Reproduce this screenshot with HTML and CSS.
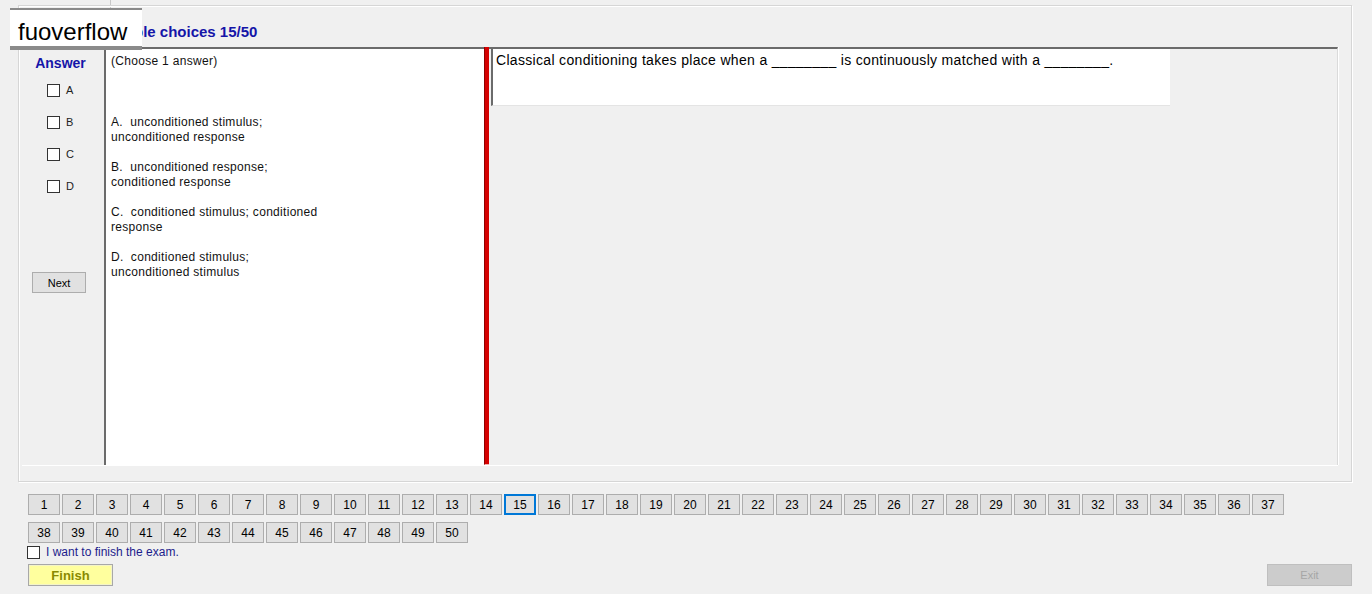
FILE: index.html
```html
<!DOCTYPE html>
<html lang="en">

<head>
    <meta charset="UTF-8">
    <meta name="viewport" content="width=device-width, initial-scale=1.0">
    <title>Exam</title>
    <link rel="stylesheet" href="styles.css">
</head>

<body>
    <div class="topstrip"><div class="tab"></div></div>

    <div class="group">
        <div class="group-title">Multiple choices 15/50</div>
        <div class="main">
            <!-- answer column -->
            <div class="answers">
                <div class="answers-head">Answer</div>
                <div class="answer-list">
                    <label class="answer-row"><span class="box"></span>A</label>
                    <label class="answer-row"><span class="box"></span>B</label>
                    <label class="answer-row"><span class="box"></span>C</label>
                    <label class="answer-row"><span class="box"></span>D</label>
                </div>
                <button class="btn next-btn">Next</button>
            </div>

            <!-- choices -->
            <div class="choices">
                <div class="choose">(Choose 1 answer)</div>
                <div class="option">A.&nbsp; unconditioned stimulus;<br>unconditioned response</div>
                <div class="option">B.&nbsp; unconditioned response;<br>conditioned response</div>
                <div class="option">C.&nbsp; conditioned stimulus; conditioned<br>response</div>
                <div class="option">D.&nbsp; conditioned stimulus;<br>unconditioned stimulus</div>
            </div>

            <div class="splitter"></div>

            <!-- question -->
            <div class="question-pane">
                <div class="question">Classical conditioning takes place when a ________ is continuously matched with a ________.</div>
            </div>
        </div>
    </div>

    <div class="nav">
        <div class="nums">
            <button class="num">1</button><button class="num">2</button><button class="num">3</button><button class="num">4</button><button class="num">5</button><button class="num">6</button><button class="num">7</button><button class="num">8</button><button class="num">9</button><button class="num">10</button>
            <button class="num">11</button><button class="num">12</button><button class="num">13</button><button class="num">14</button><button class="num current">15</button><button class="num">16</button><button class="num">17</button><button class="num">18</button><button class="num">19</button><button class="num">20</button>
            <button class="num">21</button><button class="num">22</button><button class="num">23</button><button class="num">24</button><button class="num">25</button><button class="num">26</button><button class="num">27</button><button class="num">28</button><button class="num">29</button><button class="num">30</button>
            <button class="num">31</button><button class="num">32</button><button class="num">33</button><button class="num">34</button><button class="num">35</button><button class="num">36</button><button class="num">37</button><button class="num">38</button><button class="num">39</button><button class="num">40</button>
            <button class="num">41</button><button class="num">42</button><button class="num">43</button><button class="num">44</button><button class="num">45</button><button class="num">46</button><button class="num">47</button><button class="num">48</button><button class="num">49</button><button class="num">50</button>
        </div>
        <label class="finish-check"><span class="box"></span>I want to finish the exam.</label>
        <div class="bottom">
            <button class="finish-btn">Finish</button>
            <button class="exit-btn">Exit</button>
        </div>
    </div>

    <div class="watermark">fuoverflow</div>
</body>

</html>
```

FILE: styles.css
```css
body {
    margin: 0;
    width: 1372px;
    height: 594px;
    overflow: hidden;
    font-family: "Liberation Sans", Arial, sans-serif;
    font-size: 12px;
    color: #000;
    background-color: #f0f0f0;
    position: relative;
}

.topstrip {
    height: 5px;
}

.tab {
    width: 110px;
    height: 8px;
    border-right: 1px solid #c8c8c8;
}

/* outer group box */
.group {
    margin-left: 18px;
    width: 1332px;
    height: 475px;
    border: 1px solid #d6d6d6;
    box-shadow: inset 1px 1px 0 #fff, 1px 1px 0 #fff;
}

.group-title {
    height: 41px;
    padding-left: 80px;
    line-height: 52px;
    font-size: 15px;
    font-weight: bold;
    color: #1515a8;
}

.main {
    display: flex;
    margin-left: 3px;
    width: 1316px;
    height: 418px;
    border-bottom: 1px solid #fff;
}

.answers {
    width: 82px;
    display: flex;
    flex-direction: column;
    padding-top: 8px;
}

.answers-head {
    line-height: 16px;
    font-size: 14px;
    font-weight: bold;
    color: #1515a8;
    text-align: center;
    padding-right: 5px;
}

.answer-list {
    margin-top: 13px;
    display: flex;
    flex-direction: column;
}

.answer-row {
    height: 32px;
    display: flex;
    align-items: flex-start;
    padding-left: 25px;
    font-size: 11px;
    line-height: 12px;
    gap: 6px;
    color: #222;
}

.box {
    width: 11px;
    height: 11px;
    border: 1px solid #333;
    background-color: #fff;
    flex: none;
}

.btn {
    font-family: inherit;
    font-size: 11px;
    background-color: #e1e1e1;
    border: 1px solid #adadad;
    padding: 0;
}

.next-btn {
    margin: 60px 0 0 10px;
    width: 54px;
    height: 21px;
}

.choices {
    width: 373px;
    background-color: #fff;
    border-left: 2px solid #6b6b6b;
    border-top: 2px solid #6b6b6b;
    padding: 5px 0 0 5px;
    line-height: 15px;
    letter-spacing: 0.3px;
    color: #111;
}

.choose {
    margin-bottom: 46px;
}

.option {
    margin-bottom: 15px;
}

.splitter {
    width: 4px;
    background-color: #d40000;
    border-left: 1px solid #900000;
    border-bottom: 1px solid #f3b0b0;
}

.question-pane {
    flex: 1;
    border-top: 2px solid #6b6b6b;
    border-right: 1px solid #dadada;
    box-shadow: 1px 0 0 #fff;
    padding-left: 2px;
}

.question {
    width: 674px;
    height: 53px;
    background-color: #fff;
    border-left: 2px solid #6b6b6b;
    border-bottom: 1px solid #e4e4e4;
    padding: 3px 0 0 3px;
    font-size: 14px;
    line-height: 16px;
    letter-spacing: 0.32px;
}

/* question numbers */
.nav {
    padding: 12px 20px 0 28px;
}

.nums {
    width: 1260px;
    display: flex;
    flex-wrap: wrap;
    column-gap: 2px;
    row-gap: 7px;
}

.num {
    width: 32px;
    height: 21px;
    padding: 0;
    font-family: inherit;
    font-size: 12px;
    background-color: #e1e1e1;
    border: 1px solid #adadad;
    color: #000;
}

.num.current {
    border: 2px solid #0078d7;
}

.finish-check {
    display: flex;
    align-items: center;
    gap: 6px;
    margin: 2px 0 0 -1px;
    height: 14px;
    color: #1c1c8c;
}

.bottom {
    display: flex;
    justify-content: space-between;
    margin-top: 5px;
}

.finish-btn {
    width: 85px;
    height: 22px;
    padding: 0;
    font-family: inherit;
    font-size: 13px;
    font-weight: bold;
    color: #8a8a00;
    background-color: #ffff9e;
    border: 1px solid #a8a8a8;
    box-shadow: inset 0 0 0 1px #f4f4c8;
}

.exit-btn {
    width: 85px;
    height: 22px;
    padding: 0;
    font-family: inherit;
    font-size: 11px;
    color: #a6a6a6;
    background-color: #cccccc;
    border: 1px solid #bfbfbf;
}

/* overlay label */
.watermark {
    position: absolute;
    left: 10px;
    top: 8px;
    width: 124px;
    height: 36px;
    padding-left: 8px;
    background-color: #fff;
    border-top: 2px solid #8a8a8a;
    border-bottom: 4px solid #8a8a8a;
    font-size: 24px;
    line-height: 44px;
}
```
